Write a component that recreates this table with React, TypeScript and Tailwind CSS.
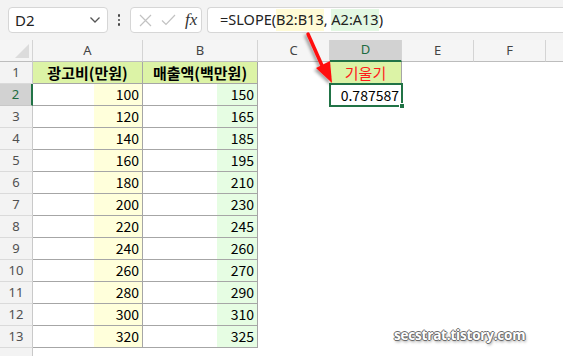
import React from "react";

const A = [100, 120, 140, 160, 180, 200, 220, 240, 260, 280, 300, 320];
const B = [150, 165, 185, 195, 210, 230, 245, 260, 270, 290, 310, 325];

const num = "font-['Noto_Sans_CJK_KR',sans-serif] text-[14px] text-black";

export default function App() {
  const rows: React.ReactNode[] = [];
  for (let r = 1; r <= 14; r++) {
    const sel = r === 2;
    rows.push(
      <div
        key={"h" + r}
        className={
          "flex items-center justify-center font-['Noto_Sans',sans-serif] text-[13px] border-b " +
          (sel
            ? "bg-[#d2d2d2] text-[#1e6b41] border-b-[#c8c8c8] border-r-2 border-r-[#217346]"
            : "bg-[#f3f3f3] text-[#505050] border-b-[#dadada] border-r border-r-[#c9c9c9]")
        }
      >
        {r <= 13 ? r : ""}
      </div>
    );
    if (r === 1) {
      rows.push(
        <div key={"a" + r} className="bg-[#dcf3a6] border-r border-b border-[#a6a6a6] flex items-center justify-center font-['Noto_Sans_CJK_KR',sans-serif] font-bold text-[15px] text-black pt-[1px]">
          광고비(만원)
        </div>
      );
      rows.push(
        <div key={"b" + r} className="bg-[#dcf3a6] border-r border-b border-[#a6a6a6] flex items-center justify-center font-['Noto_Sans_CJK_KR',sans-serif] font-bold text-[15px] text-black pt-[1px]">
          매출액(백만원)
        </div>
      );
    } else if (r <= 13) {
      rows.push(
        <div key={"a" + r} className={"bg-[linear-gradient(to_right,#ffffff_61px,#ffffdb_61px)] border-r border-b border-[#a6a6a6] flex items-center justify-end pr-[3px] " + num}>
          {A[r - 2]}
        </div>
      );
      rows.push(
        <div key={"b" + r} className={"bg-[linear-gradient(to_right,#ffffff_74px,#e6fde3_74px)] border-r border-b border-[#a6a6a6] flex items-center justify-end pr-[3px] " + num}>
          {B[r - 2]}
        </div>
      );
    } else {
      rows.push(<div key={"a" + r} className="bg-white" />);
      rows.push(<div key={"b" + r} className="bg-white" />);
    }
    rows.push(<div key={"c" + r} className="bg-white" />);
    if (r === 1) {
      rows.push(
        <div key={"d" + r} className="bg-[#dcf3a6] border-r border-b border-[#a6a6a6] flex items-center justify-center font-['Noto_Sans_CJK_KR',sans-serif] text-[15px] text-[#ff1a1a] pt-[1px]">
          기울기
        </div>
      );
    } else if (r === 2) {
      rows.push(
        <div key={"d" + r} className={"relative bg-white flex items-center justify-end pr-[3px] " + num}>
          0.787587
          <div className="absolute left-[-1px] top-[-1px] right-[-1px] bottom-[-1px] border-2 border-[#217346]" />
          <div className="absolute right-[-3px] bottom-[-3px] w-[6px] h-[6px] bg-[#217346] border border-white" />
        </div>
      );
    } else {
      rows.push(<div key={"d" + r} className="bg-white" />);
    }
    rows.push(<div key={"e" + r} className="bg-white" />);
    rows.push(<div key={"f" + r} className="bg-white" />);
    rows.push(<div key={"g" + r} className="bg-white" />);
  }

  const colHead = (label: string, sel = false) => (
    <div
      className={
        "flex items-center justify-center font-['Noto_Sans',sans-serif] text-[13px] border-r border-r-[#d4d4d4] " +
        (sel
          ? "bg-[#d2d2d2] text-[#1e6b41] border-b-2 border-b-[#217346]"
          : "bg-[#f5f5f5] text-[#444] border-b border-b-[#bdbdbd]")
      }
    >
      {label}
    </div>
  );

  return (
    <div className="relative w-[563px] h-[356px] overflow-hidden bg-white">
      <div className="h-[40px] bg-[#f3f3f3] flex items-start pt-[7px] pl-[8px]">
        <div className="w-[100px] h-[26px] bg-white border border-[#d6d6d6] rounded-[4px] flex items-center justify-between pl-[6px] pr-[6px]">
          <span className="font-['Noto_Sans',sans-serif] text-[15px] text-[#222]">D2</span>
          <svg width="12" height="8" viewBox="0 0 12 8">
            <path d="M1.5 1.5 L6 6 L10.5 1.5" fill="none" stroke="#555" strokeWidth="1.3" />
          </svg>
        </div>
        <div className="w-[22px] h-[26px] flex flex-col items-center justify-center gap-[2px]">
          <div className="w-[2.5px] h-[2.5px] rounded-full bg-[#444]" />
          <div className="w-[2.5px] h-[2.5px] rounded-full bg-[#444]" />
          <div className="w-[2.5px] h-[2.5px] rounded-full bg-[#444]" />
        </div>
        <div className="w-[72px] h-[26px] bg-white border border-[#d6d6d6] rounded-[4px] flex items-center pl-[8px] gap-[9px]">
          <svg width="13" height="13" viewBox="0 0 13 13">
            <path d="M1 1 L12 12 M12 1 L1 12" stroke="#c2c2c2" strokeWidth="1.2" />
          </svg>
          <svg width="15" height="12" viewBox="0 0 15 12">
            <path d="M1 6.5 L5 10.5 L14 1" fill="none" stroke="#c2c2c2" strokeWidth="1.2" />
          </svg>
          <span className="font-['Liberation_Serif',serif] italic text-[17px] text-[#333] leading-none -mt-[2px]">fx</span>
        </div>
        <div className="ml-[5px] flex-1 h-[26px] bg-white border border-r-0 border-[#d6d6d6] rounded-l-[4px] flex items-center pl-[12px] font-['Noto_Sans',sans-serif] text-[14.5px] text-[#222] whitespace-nowrap">
          <span>=SLOPE(</span>
          <span className="bg-[#fffbd6]">B2:B13</span>
          <span>,&nbsp;</span>
          <span className="bg-[#e3f8e3]">A2:A13</span>
          <span>)</span>
        </div>
      </div>

      <div className="grid grid-cols-[33px_110px_115px_72px_72px_72px_72px_1fr] grid-rows-[22px_repeat(14,22px)]">
        <div className="bg-[#f5f5f5] border-r border-b border-r-[#d4d4d4] border-b-[#bdbdbd] flex items-end justify-end pr-[3px] pb-[3px]">
          <svg width="14" height="14" viewBox="0 0 14 14">
            <path d="M14 0 L14 14 L0 14 Z" fill="#dcdcdc" />
          </svg>
        </div>
        {colHead("A")}
        {colHead("B")}
        {colHead("C")}
        {colHead("D", true)}
        {colHead("E")}
        {colHead("F")}
        <div className="bg-[#f5f5f5] border-b border-b-[#bdbdbd]" />
        {rows}
      </div>

      <svg className="absolute left-[296px] top-[28px]" width="50" height="64" viewBox="0 0 50 64">
        <defs>
          <filter id="sh" x="-50%" y="-50%" width="200%" height="200%">
            <feDropShadow dx="-2" dy="2" stdDeviation="1.5" floodColor="#000" floodOpacity="0.35" />
          </filter>
        </defs>
        <g filter="url(#sh)">
          <path d="M12 6 L28 42" stroke="#ff1010" strokeWidth="3.5" strokeLinecap="round" />
          <path d="M20 40 L36 55 L34 33 Z" fill="#ff1010" />
        </g>
      </svg>

      <div className="absolute left-[394px] top-[325px] font-['Open_Sans',sans-serif] font-bold text-[13.5px] text-white tracking-[-0.2px] [text-shadow:1px_0_0_#6a6a6a,-1px_0_0_#6a6a6a,0_1px_0_#6a6a6a,0_-1px_0_#6a6a6a,1px_2px_3px_#999]">
        secstrat.tistory.com
      </div>
    </div>
  );
}
